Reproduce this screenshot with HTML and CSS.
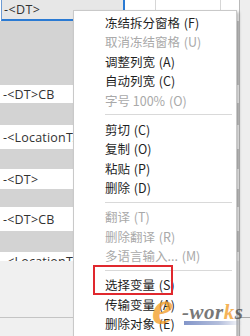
FILE: index.html
```html
<!DOCTYPE html>
<html>
<head>
<meta charset="utf-8">
<link rel="stylesheet" href="styles.css">
</head>
<body>
<div class="app">
  <div class="grid">
    <div class="row row-head">
      <div class="edit">-&lt;DT&gt;</div>
      <div class="hcell hc1"></div>
      <div class="hcell hc2"></div>
      <div class="hcell hc3"></div>
    </div>
    <div class="row gray h64"></div>
    <div class="row white h18"><span class="txt">-&lt;DT&gt;CB</span></div>
    <div class="row gray h22"></div>
    <div class="row white h24"><span class="txt">-&lt;LocationTA</span></div>
    <div class="row gray h20"></div>
    <div class="row white h20"><span class="txt">-&lt;DT&gt;</span></div>
    <div class="row gray h18"></div>
    <div class="row white h24"><span class="txt">-&lt;DT&gt;CB</span></div>
    <div class="row gray h21"></div>
    <div class="row white cut"><span class="txt">-&lt;LocationTA</span></div>
    <div class="panel p1"></div>
    <div class="panel p2"></div>
  </div>
  <div class="side">
    <div class="side-top"></div>
    <div class="side-bottom"></div>
  </div>

  <div class="menu">
    <div class="item">冻结拆分窗格 <span class="key">(F)</span></div>
    <div class="item off">取消冻结窗格 <span class="key">(U)</span></div>
    <div class="item">调整列宽 <span class="key">(A)</span></div>
    <div class="item">自动列宽 <span class="key">(C)</span></div>
    <div class="item off">字号 100% <span class="key">(O)</span></div>
    <div class="sep"></div>
    <div class="item">剪切 <span class="key">(C)</span></div>
    <div class="item">复制 <span class="key">(O)</span></div>
    <div class="item">粘贴 <span class="key">(P)</span></div>
    <div class="item">删除 <span class="key">(D)</span></div>
    <div class="sep"></div>
    <div class="item off">翻译 <span class="key">(T)</span></div>
    <div class="item off">删除翻译 <span class="key">(R)</span></div>
    <div class="item off">多语言输入... <span class="key">(M)</span></div>
    <div class="sep"></div>
    <div class="item">选择变量 <span class="key">(S)</span></div>
    <div class="item">传输变量 <span class="key">(A)</span></div>
    <div class="item">删除对象 <span class="key">(E)</span></div>
    <div class="mark"></div>
  </div>

  <div class="logo">
    <span class="logo-e">e</span><span class="logo-works">-wor<span class="logo-k">k</span>s</span>
    <div class="swoosh"></div>
  </div>
</div>
</body>
</html>
```

FILE: styles.css
```css
html, body {
  margin: 0;
  padding: 0;
}
body {
  width: 250px;
  height: 336px;
  overflow: hidden;
  background: #f0f0f0;
  font-family: "Open Sans", "Noto Sans", sans-serif;
}
.app {
  position: relative;
  display: flex;
  width: 250px;
  height: 336px;
  overflow: hidden;
}
.grid {
  width: 239px;
  display: flex;
  flex-direction: column;
  flex: none;
}
.side {
  flex: 1;
  border-left: 1px solid #b9b9b9;
  display: flex;
  flex-direction: column;
}
.side-top {
  height: 317px;
  background: #eeeeee;
}
.side-bottom {
  border-top: 1px solid #a8a8a8;
  flex: 1;
  background: #f0f0f0;
}
.row {
  display: flex;
  align-items: center;
  flex: none;
  overflow: hidden;
}
.row-head {
  height: 21px;
  align-items: stretch;
  background: #ffffff;
}
.edit {
  width: 124px;
  margin-left: 1px;
  border-left: 1px solid #6d9bd3;
  border-right: 2px solid #2a7ad3;
  border-bottom: 2px solid #2a7ad3;
  background: #e7e7e7;
  font-size: 12.5px;
  letter-spacing: 0.4px;
  color: #333;
  line-height: 19px;
  padding-left: 2px;
  box-sizing: border-box;
  height: 21px;
}
.hcell {
  border-right: 1px solid #d6d6d6;
  background: #fff;
}
.hc1 { width: 30px; }
.hc2 { width: 64px; }
.hc3 { flex: 1; border-right: none; }
.gray { background: #d3d3d3; }
.white { background: #ffffff; }
.h64 { height: 64px; }
.h18 { height: 18px; }
.h20 { height: 20px; }
.h21 { height: 21px; }
.h22 { height: 22px; }
.h24 { height: 24px; }
.cut {
  height: 9px;
  align-items: flex-start;
}
.cut .txt {
  line-height: 20px;
}
.txt {
  padding-left: 3px;
  font-size: 12.5px;
  letter-spacing: 0.2px;
  color: #333;
  white-space: nowrap;
}
.panel { background: #f0f0f0; }
.p1 {
  height: 56px;
  border-bottom: 1px solid #c4c4c4;
}
.p2 { flex: 1; }

.menu {
  position: absolute;
  left: 73px;
  top: 10px;
  width: 164px;
  height: 340px;
  box-sizing: border-box;
  background: #ffffff;
  border: 1px solid #c9c9c9;
  box-shadow: 2px 2px 3px rgba(0, 0, 0, 0.28);
  padding-top: 1.5px;
  font-family: "Noto Sans CJK SC", "Noto Sans", sans-serif;
  font-size: 12.5px;
  color: #1f1f1f;
}
.item {
  height: 19.5px;
  line-height: 19.5px;
  padding-left: 31px;
  white-space: nowrap;
}
.key {
  margin-left: 1px;
}
.off { color: #a9a9a9; }
.sep {
  height: 9.5px;
  display: flex;
  align-items: center;
  padding-left: 31px;
  padding-right: 4px;
}
.sep::before {
  content: "";
  flex: 1;
  height: 1px;
  background: #d9d9d9;
}
.mark {
  position: absolute;
  left: 19px;
  top: 254px;
  width: 80px;
  height: 30px;
  box-sizing: border-box;
  border: 2px solid #e0282e;
}

.logo {
  position: absolute;
  left: 150px;
  top: 292px;
  width: 98px;
  height: 44px;
  opacity: 0.75;
}
.logo-e {
  position: absolute;
  left: 2px;
  top: -12px;
  font-family: "Liberation Serif", serif;
  font-style: italic;
  font-weight: bold;
  font-size: 48px;
  color: #f29a1f;
}
.logo-works {
  position: absolute;
  left: 32px;
  top: 8px;
  font-family: "Liberation Serif", serif;
  font-style: italic;
  font-weight: bold;
  font-size: 21px;
  color: #4b4b4b;
  letter-spacing: 0.5px;
}
.logo-k { color: #f29a1f; }
.swoosh {
  position: absolute;
  left: 34px;
  top: 29px;
  width: 58px;
  height: 4px;
  background: linear-gradient(90deg, #5a73b8, #9aa8d0 60%, rgba(200, 210, 235, 0));
}
```
